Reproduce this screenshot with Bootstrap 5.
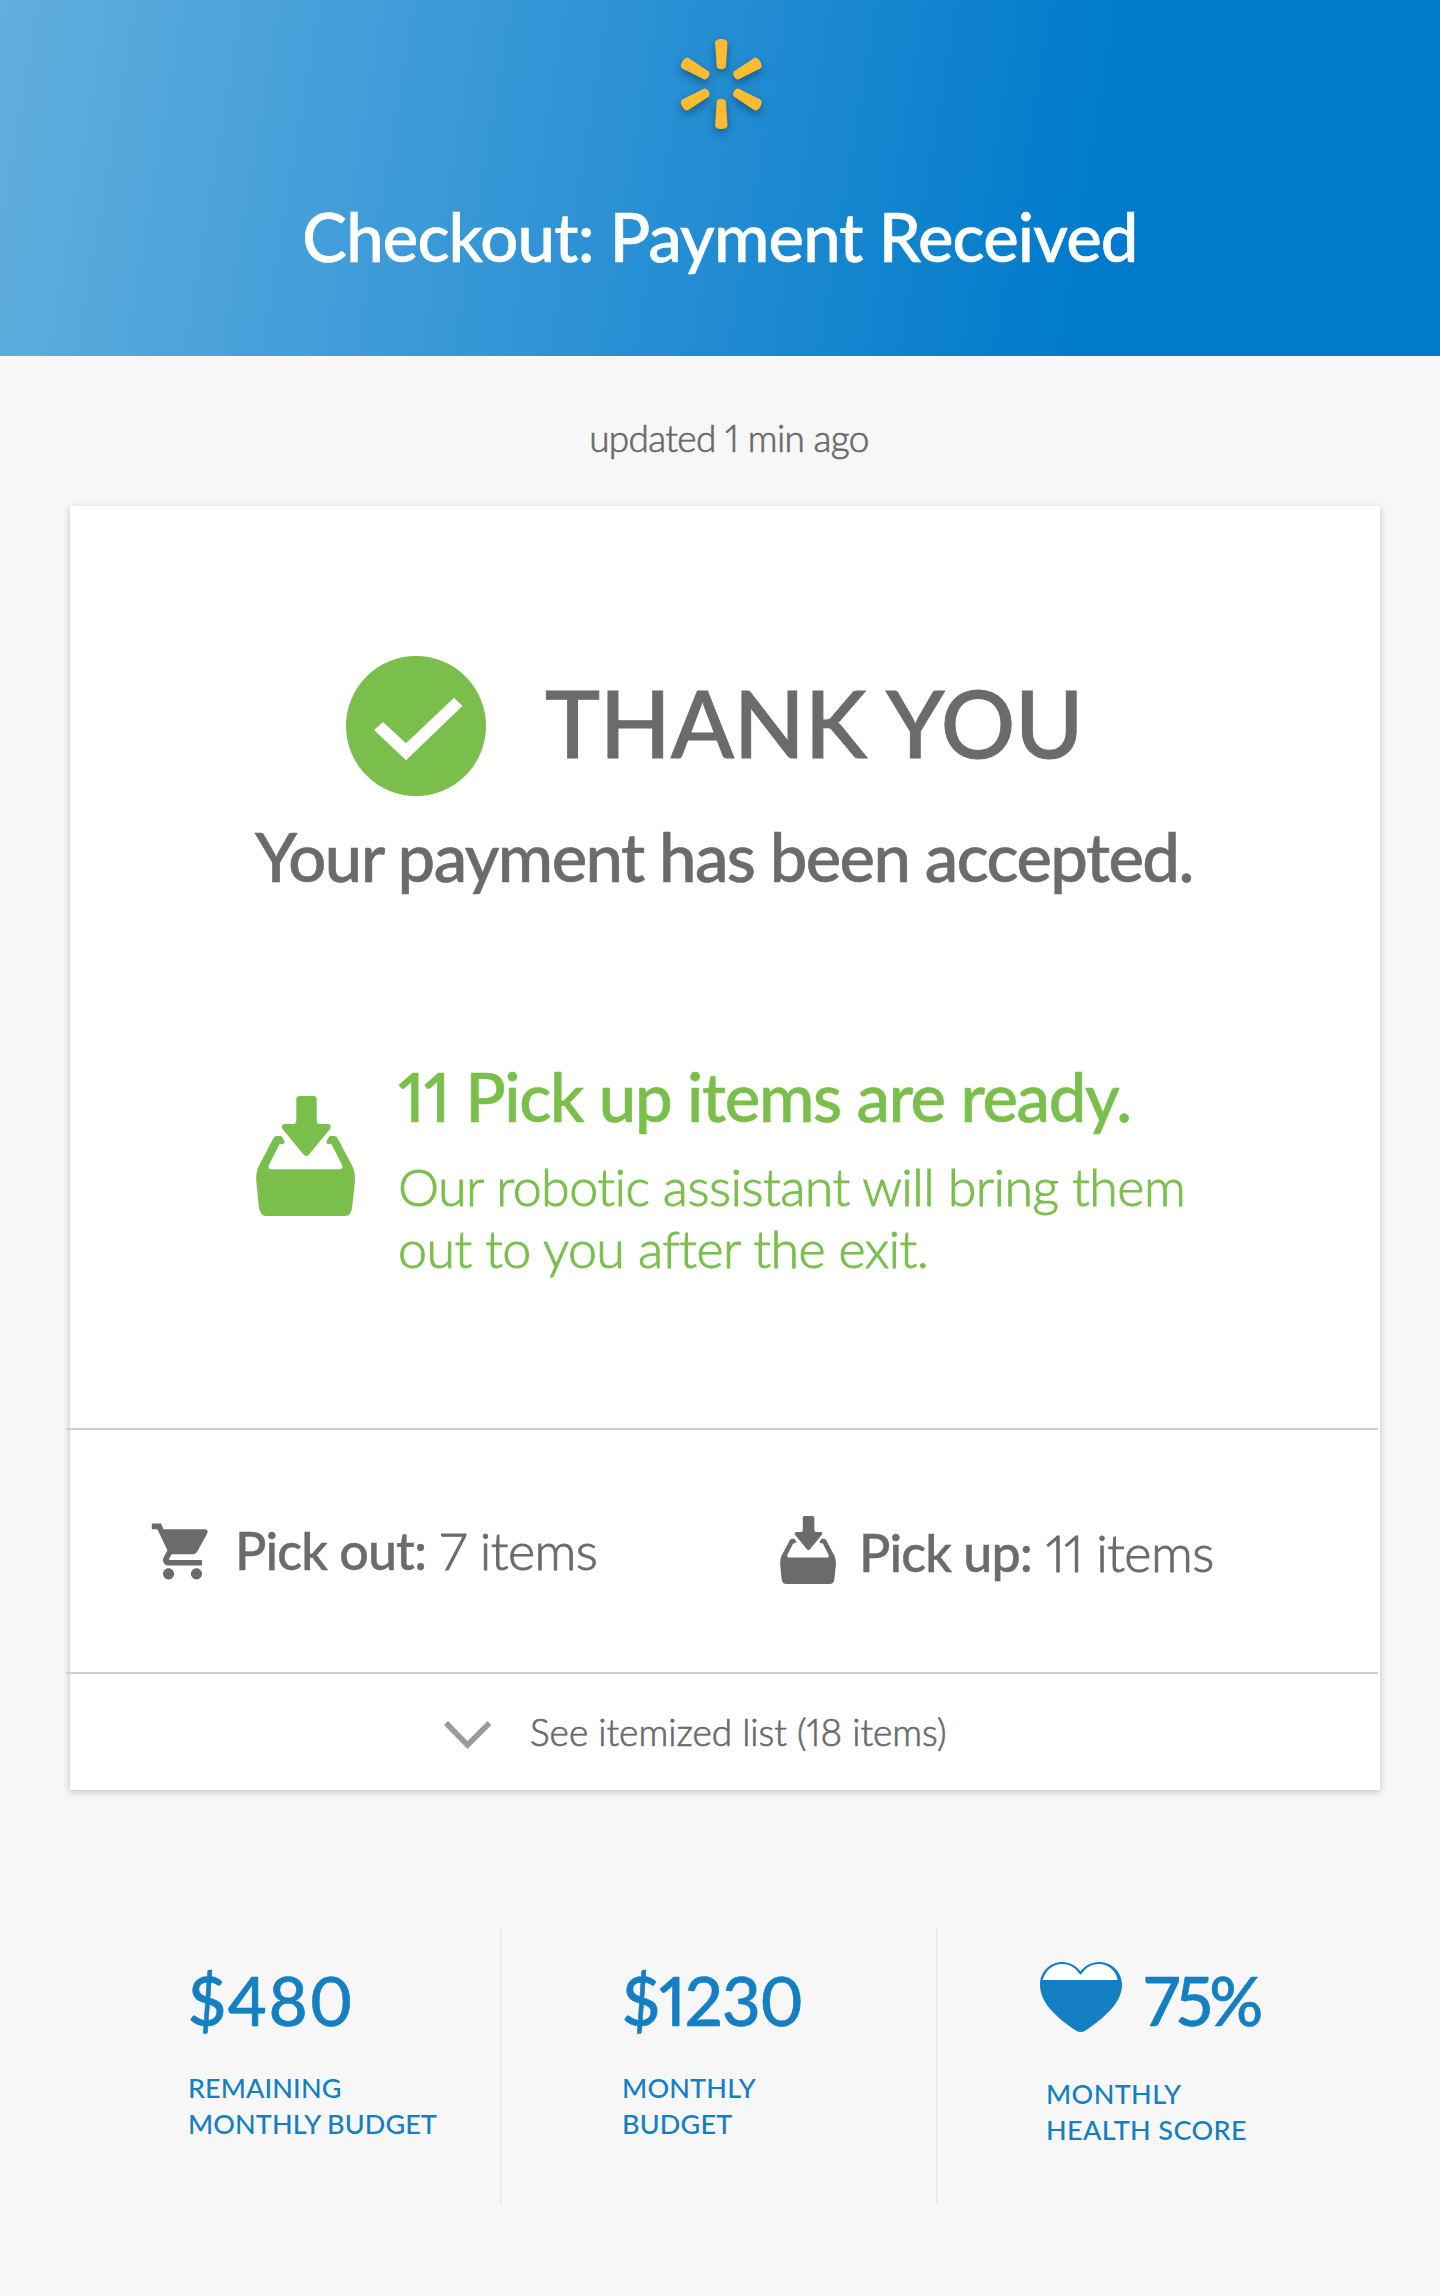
<!DOCTYPE html>
<html lang="en">
<head>
<meta charset="utf-8">
<meta name="viewport" content="width=device-width, initial-scale=1">
<title>Checkout: Payment Received</title>
<link href="https://cdn.jsdelivr.net/npm/bootstrap@5.3.0/dist/css/bootstrap.min.css" rel="stylesheet">
<style>
body{font-family:Lato,"Liberation Sans",sans-serif;background:#f7f7f7;color:#6b6b6b;min-height:2296px;font-variant-numeric:proportional-nums;font-variant-ligatures:none}
svg{display:block;flex:none;overflow:visible}
.hero{height:356px;padding-top:30px;background:linear-gradient(99.5deg,#62aede 0%,#3496d6 36%,#007acb 76%)}
.logo{filter:drop-shadow(0 4px 4px rgba(0,0,0,.35))}
.t-lg,.t-xl,.t-md,.t-sm,.t-xs{white-space:nowrap;margin:0;font-weight:500}
.t-lg{font-size:67px;line-height:84px;letter-spacing:-1.4px;-webkit-text-stroke:.6px currentColor}
.t-xl{font-size:93px;line-height:112px;-webkit-text-stroke:1px currentColor}
.t-md{font-size:52px;line-height:62px;font-weight:300;letter-spacing:-.58px;-webkit-text-stroke:.9px currentColor}
.t-md b{font-weight:500;letter-spacing:-.9px;-webkit-text-stroke:.4px currentColor}
.t-sm{font-size:37px;line-height:46px;font-weight:300;-webkit-text-stroke:.7px currentColor}
.t-xs{font-size:27px;line-height:36px;letter-spacing:.2px}
.hero h1{margin-top:54px;letter-spacing:-.85px}
.updated{padding:59px 0 45px 18px;letter-spacing:-.65px}
.receipt{width:1310px;height:1284px;margin-left:70px;background:#fff;box-shadow:0 2px 7px rgba(0,0,0,.22)}
.receipt-main{height:922px;padding-top:150px}
.rule{height:2px;background:#cfcfcf;margin:0 2px 0 -4px}
.thanks{padding-left:276px;gap:59px}
.thanks h2{padding-top:10px;letter-spacing:-.3px}
.accepted{padding:18px 0 0 185px;letter-spacing:-1.58px}
.ready{padding:156px 0 0 186px;gap:43px}
.ready svg{margin-top:42px}
.ready h3{letter-spacing:-1.3px}
.ready p{margin-top:17px}
.green{color:#7abf4b}
.n11{letter-spacing:-1px}
.counts{height:242px}
.pick-out{width:710px;padding:88px 0 0 79px;gap:19px}
.pick-out span{padding-top:1px}
.pick-up{padding-top:86px;gap:23px}
.pick-up .t-md{padding-top:5px}
.list-toggle{padding:35px 0 0 374px;gap:38px}
.list-toggle svg{margin-top:12px}
.stats{margin-top:138px;color:#147fc3}
.stat{height:276px;padding-top:30px}
.stat + .stat{border-left:2px solid #ebebeb}
.remaining{width:500px;padding-left:188px}
.remaining .t-lg{letter-spacing:1.2px}
.remaining .t-xs{letter-spacing:.1px}
.monthly{width:436px;padding-left:120px}
.monthly .t-lg{letter-spacing:-1px}
.health{padding-left:102px}
.stat .t-xs{margin-top:28px}
.health .t-xs{margin:34px 0 0 6px;letter-spacing:.4px}
.health .score{gap:22px}
.health .t-lg{letter-spacing:-3.500px}
.health svg{margin-top:4px}
</style>
</head>
<body>
<svg width="0" height="0" class="position-absolute">
<symbol id="tray" viewBox="0 0 99 120">
<path d="M43.500 0H57.500Q60.700 0 60.700 3.500V24.500Q60.700 28 64 28H72.500Q76 28.500 74 33L53 58.500Q50.300 61.500 47.500 58.500L26.500 33Q24.500 28.500 28.500 28H37Q40.300 28 40.300 24.500V3.500Q40.300 0 43.500 0Z"/>
<path d="M22.500 40H25Q27.500 41.500 28.700 46Q28.500 48 26.500 48H24.500Q23.500 48 22.800 49.500L12.700 69.500Q12 73.300 15 73.300H84Q87 73.300 86.300 69.500L76.200 49.500Q75.500 48 74.500 48H72.500Q70.300 48 70.300 46Q71.500 41.500 74 40H78.500Q80.500 40 82 43L96.500 70.500Q99 76 99 84L96.300 110Q95.500 120 89 120H10Q4 120 2.700 110L.2 84Q0 76 2.500 70.500L17 43Q18.500 40 20.500 40Z"/>
</symbol>
</svg>

<header class="hero text-white d-flex flex-column align-items-center">
<svg class="logo" width="120" height="110" viewBox="-61.3 -54 120 110" fill="#fdbb30">
<defs><path id="ray" d="M-6.200 -41.500C-6.200 -46.200 6.200 -46.200 6.200 -41.500L4.600 -17.500C4.200 -13.800 -4.200 -13.800 -4.600 -17.500Z"/></defs>
<use href="#ray"/><use href="#ray" transform="rotate(60)"/><use href="#ray" transform="rotate(120)"/><use href="#ray" transform="rotate(180)"/><use href="#ray" transform="rotate(240)"/><use href="#ray" transform="rotate(300)"/>
</svg>
<h1 class="t-lg">Checkout: Payment Received</h1>
</header>

<main>
<div class="updated text-center t-sm">updated 1 min ago</div>
<section class="receipt">
<div class="receipt-main">
<div class="thanks d-flex align-items-start">
<svg width="140" height="140" viewBox="0 0 140 140"><circle cx="70" cy="70" r="70" fill="#7abf4b"/><path fill="#fff" d="M28 74L37 66L60 87.300L108 41.700L116.400 50L60 104.300Z"/></svg>
<h2 class="t-xl">THANK YOU</h2>
</div>
<p class="accepted t-lg">Your payment has been accepted.</p>
<div class="ready green d-flex align-items-start">
<svg width="99" height="120" fill="currentColor"><use href="#tray"/></svg>
<div>
<h3 class="t-lg"><span class="n11">11</span> Pick up items are ready.</h3>
<p class="t-md">Our robotic assistant will bring them<br>out to you after the exit.</p>
</div>
</div>
</div>
<div class="rule"></div>
<div class="counts d-flex align-items-start">
<div class="pick-out d-flex align-items-start">
<svg width="67" height="67" viewBox="0 0 24 24" fill="currentColor"><path d="M7 18c-1.100 0-1.990.9-1.990 2S5.900 22 7 22s2-.9 2-2-.9-2-2-2zM1 2v2h2l3.600 7.590-1.350 2.450c-.16.280-.25.610-.25.960 0 1.100.9 2 2 2h12v-2H7.420c-.14 0-.25-.11-.25-.25l.03-.12.900-1.630h7.450c.75 0 1.410-.41 1.750-1.030l3.580-6.490A1 1 0 0 0 20 4H5.210l-.94-2H1zm16 16c-1.100 0-1.990.9-1.990 2s.89 2 1.990 2 2-.9 2-2-.9-2-2-2z"/></svg>
<span class="t-md"><b>Pick out:</b> 7 items</span>
</div>
<div class="pick-up d-flex align-items-start">
<svg width="56" height="68" fill="currentColor"><use href="#tray"/></svg>
<span class="t-md"><b>Pick up:</b> <span class="n11">11</span> items</span>
</div>
</div>
<div class="rule"></div>
<div class="list-toggle d-flex align-items-start">
<svg width="48" height="28" viewBox="0 0 48 28" fill="none" stroke="#9b9b9b" stroke-width="5.500"><path d="M2 2L23.500 24L45.500 2"/></svg>
<span class="t-sm">See itemized list (18 items)</span>
</div>
</section>

<section class="stats d-flex">
<div class="stat remaining"><div class="t-lg">$480</div><div class="t-xs">REMAINING<br>MONTHLY BUDGET</div></div>
<div class="stat monthly"><div class="t-lg">$1230</div><div class="t-xs">MONTHLY<br>BUDGET</div></div>
<div class="stat health">
<div class="score d-flex align-items-start">
<svg width="82" height="70" viewBox="0 0 82 70"><path fill="#147fc3" d="M40.500 9.500C36 3.500 29.500 0 22.300 0C10 0 0 9.500 0 23C0 41 17 56 36 68.500Q40.700 71.500 45.500 68.500C64 56 82 41 82 23C82 9.500 71.500 0 58.700 0C51.500 0 45 3.500 40.500 9.500Z"/><path fill="#fff" d="M2.700 18C5.500 8 13 2 22.300 2C29 2 34.500 5 38.300 10.500L40.500 12.800L42.500 10.500C46.500 5.500 51.500 2 58.700 2C69 2 76 9 77.700 18Z"/></svg>
<div class="t-lg">75%</div>
</div>
<div class="t-xs">MONTHLY<br>HEALTH SCORE</div>
</div>
</section>
</main>
<script src="https://cdn.jsdelivr.net/npm/bootstrap@5.3.0/dist/js/bootstrap.bundle.min.js"></script>
</body>
</html>
